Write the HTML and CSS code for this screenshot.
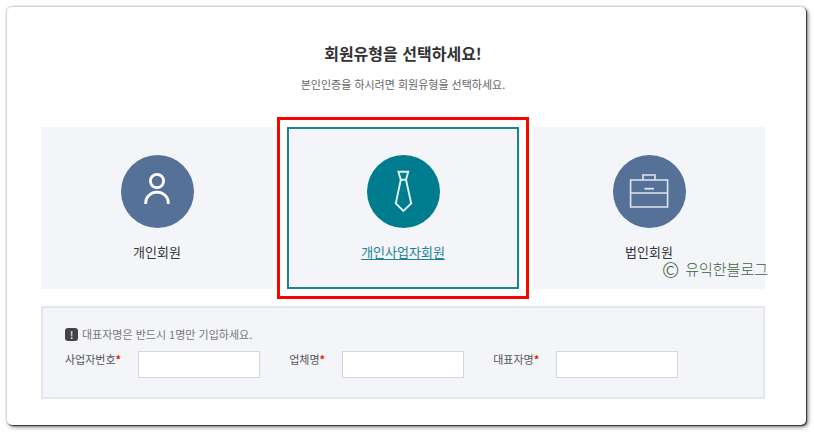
FILE: index.html
```html
<!DOCTYPE html>
<html lang="ko">
<head>
  <meta charset="UTF-8">
  <meta name="viewport" content="width=device-width, initial-scale=1.0">
  <title>회원유형 선택</title>
  <link rel="stylesheet" href="styles.css">
</head>
<body>
  <main class="panel">
    <h1 class="title">회원유형을 선택하세요!</h1>
    <p class="subtitle">본인인증을 하시려면 회원유형을 선택하세요.</p>

    <div class="types">
      <a class="type" href="#personal">
        <span class="circle">
          <svg width="73" height="73" viewBox="0 0 73 73" fill="none" stroke="#fff" stroke-width="2.8">
            <circle cx="36" cy="26" r="6.6"/>
            <path d="M24.7 49v-1.5a11.3 10.3 0 0 1 22.6 0V49"/>
          </svg>
        </span>
        <span class="type-name">개인회원</span>
      </a>
      <a class="type selected" href="#business">
        <span class="circle">
          <svg width="73" height="73" viewBox="0 0 73 73" fill="none" stroke="#e3f1f4" stroke-width="1.9">
            <path d="M31.4 16.8h9.8l-2.2 8h-5.2z"/>
            <path d="M33.8 24.8l-5 23.6 7.6 7.6 7.8-7.6-5.2-23.6"/>
          </svg>
        </span>
        <span class="type-name">개인사업자회원</span>
      </a>
      <a class="type" href="#corporate">
        <span class="circle">
          <svg width="73" height="73" viewBox="0 0 73 73" fill="none" stroke="#dfe5ee" stroke-width="1.6">
            <path d="M17.6 25h37v27h-37zM17.6 38h37M30 25v-5h12v5"/>
            <path d="M31.5 33.7H41" stroke-width="1.8"/>
          </svg>
        </span>
        <span class="type-name">법인회원</span>
        <span class="watermark"><span class="mark">©</span> 유익한블로그</span>
      </a>
    </div>

    <form class="form">
      <p class="notice"><span class="badge">!</span>대표자명은 반드시 1명만 기입하세요.</p>
      <div class="fields">
        <div class="field">
          <label for="bizNo">사업자번호<b>*</b></label>
          <input type="text" id="bizNo">
        </div>
        <div class="field">
          <label for="company">업체명<b>*</b></label>
          <input type="text" id="company">
        </div>
        <div class="field">
          <label for="owner">대표자명<b>*</b></label>
          <input type="text" id="owner">
        </div>
      </div>
    </form>
  </main>
</body>
</html>
```
FILE: styles.css
```css
* {
  box-sizing: border-box;
}
body {
  margin: 0;
  padding: 7px 8px 8px 7px;
  font-family: "Noto Sans CJK KR", "Noto Sans", sans-serif;
  background-color: #fff;
  color: #333;
}
.panel {
  padding: 34px 41px 26px 34px;
  border-radius: 5px;
  background-color: #fff;
  box-shadow: 1px 1px 1px #333, 2px 2px 4px rgba(0, 0, 0, 0.5), 0 0 3px rgba(0, 0, 0, 0.3);
}
.title {
  margin: 0;
  font-size: 16px;
  font-weight: 700;
  line-height: 24px;
  text-align: center;
}
.subtitle {
  margin: 10px 0 34px;
  font-size: 11px;
  line-height: 18px;
  text-align: center;
  color: #666;
}
.types {
  display: grid;
  grid-template-columns: repeat(3, 1fr);
  gap: 14px;
}
.type {
  position: relative;
  display: flex;
  flex-direction: column;
  align-items: center;
  gap: 14px;
  padding: 26px 0;
  border: 2px solid #f3f5f9;
  background-color: #f3f5f9;
  font-size: 13px;
  line-height: 19px;
  color: #333;
  text-decoration: none;
}
.circle {
  width: 73px;
  height: 73px;
  border-radius: 50%;
  background-color: #567197;
}
.circle svg {
  display: block;
}
.selected {
  border-color: #1b8394;
  color: #1b8394;
  text-decoration: underline;
  text-underline-offset: 2px;
  outline: 3px solid #f00;
  outline-offset: 7px;
}
.selected .circle {
  background-color: #007c8f;
}
.watermark {
  position: absolute;
  right: -5px;
  bottom: 7px;
  display: flex;
  align-items: center;
  gap: 6px;
  font-size: 15px;
  font-weight: 300;
  line-height: 22px;
  color: #3f5f3f;
  white-space: nowrap;
}
.mark {
  font-size: 21px;
}
.form {
  margin-top: 17px;
  padding: 18px 22px 19px;
  border: 2px solid #e4e7ee;
  background-color: #f3f5f9;
  font-size: 11px;
  line-height: 16px;
}
.notice {
  display: flex;
  align-items: center;
  gap: 4px;
  margin: 0 0 9px;
  color: #777;
}
.badge {
  width: 13px;
  height: 13px;
  border-radius: 3px;
  background-color: #444;
  color: #ddd;
  font-size: 10px;
  font-weight: 700;
  line-height: 13px;
  text-align: center;
}
.fields {
  display: flex;
  gap: 29px;
}
.field {
  display: flex;
  align-items: flex-start;
  gap: 17px;
}
.field label {
  color: #555;
}
.field b {
  color: #e22400;
}
.field input {
  width: 122px;
  height: 27px;
  padding: 0 6px;
  border: 1px solid #d5d7db;
  background-color: #fff;
  font: inherit;
}
```
